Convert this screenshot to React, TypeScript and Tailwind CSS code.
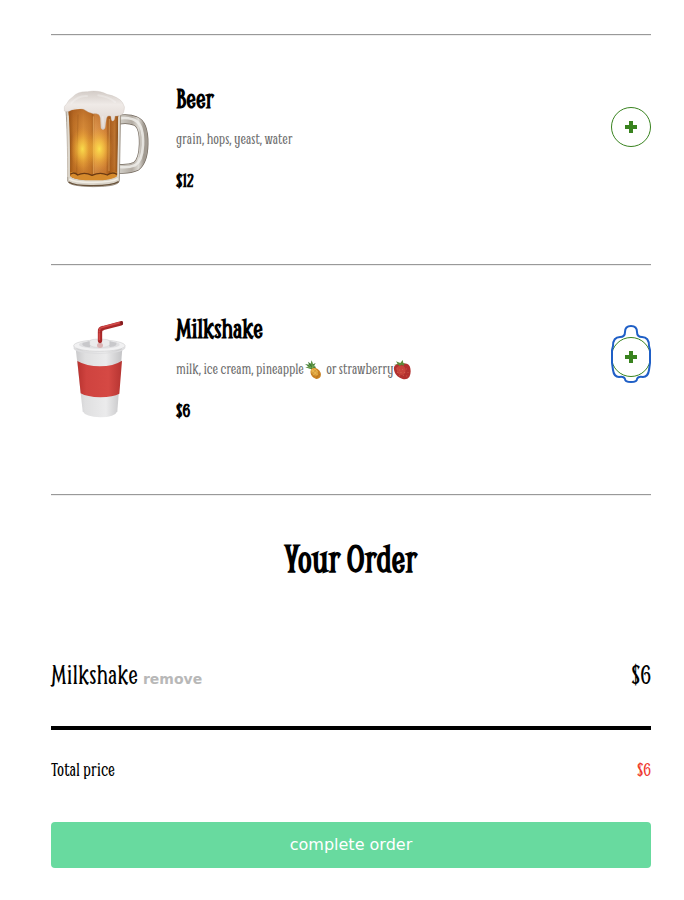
import type { ReactNode } from "react";

const display = "font-['Smythe','Liberation_Sans_Narrow','Liberation_Serif',serif]";

function Beer() {
  return (
    <svg viewBox="3 39 300 300" className="h-[100px] w-[100px]" role="img" aria-label="Beer mug">
      <defs>
        <linearGradient id="ale" x1="0" x2="1">
          <stop offset="0" stopColor="#87470f" />
          <stop offset=".1" stopColor="#bd7026" />
          <stop offset=".3" stopColor="#d98f3c" />
          <stop offset=".49" stopColor="#c1752a" />
          <stop offset=".53" stopColor="#e09b54" />
          <stop offset=".75" stopColor="#d0813a" />
          <stop offset=".82" stopColor="#a35a1c" />
          <stop offset=".92" stopColor="#bd7430" />
          <stop offset="1" stopColor="#7c4514" />
        </linearGradient>
        <linearGradient id="aleShade" x1="0" y1="0" x2="0" y2="1">
          <stop offset="0" stopColor="#a0521a" stopOpacity=".6" />
          <stop offset=".4" stopColor="#c97828" stopOpacity="0" />
          <stop offset=".8" stopColor="#b4600f" stopOpacity=".15" />
          <stop offset="1" stopColor="#a55208" stopOpacity=".5" />
        </linearGradient>
        <radialGradient id="aleGlow">
          <stop offset="0" stopColor="#ffe94e" />
          <stop offset=".4" stopColor="#fccb40" stopOpacity=".7" />
          <stop offset="1" stopColor="#e79322" stopOpacity="0" />
        </radialGradient>
        <linearGradient id="foam" x1="0" y1="0" x2="0" y2="1">
          <stop offset="0" stopColor="#d3ccc7" />
          <stop offset=".35" stopColor="#efeae7" />
          <stop offset="1" stopColor="#d9cfc9" />
        </linearGradient>
        <linearGradient id="handle" x1="0" x2="1">
          <stop offset="0" stopColor="#d5d2cb" />
          <stop offset=".55" stopColor="#b3aca3" />
          <stop offset=".8" stopColor="#dcd9d3" />
          <stop offset="1" stopColor="#a29b92" />
        </linearGradient>
      </defs>
      <path d="M204 134Q236 129 256 138Q282 148 281 207Q280 258 258 274Q237 284 203 281" fill="none" stroke="#72685d" strokeWidth="29" />
      <path d="M204 134Q236 129 256 138Q282 148 281 207Q280 258 258 274Q237 284 203 281" fill="none" stroke="url(#handle)" strokeWidth="25" />
      <path d="M208 130Q243 126 260 139Q281 156 279 210Q277 258 255 271Q235 279 208 276" fill="none" stroke="#efedea" strokeWidth="8" opacity=".85" />
      <path d="M48 108Q53 165 53 318Q54 334 130 335Q206 335 208 318L212 115Z" fill="#d9d3c8" stroke="#827566" strokeWidth="2" />
      <path d="M55 106Q61 165 60 302Q72 316 130 315Q190 315 202 301L206 115Q170 90 125 98Z" fill="url(#ale)" />
      <path d="M55 106Q61 165 60 302Q72 316 130 315Q190 315 202 301L206 115Q170 90 125 98Z" fill="url(#aleShade)" />
      <path d="M84 119L80 299M127 113V306M174 126L171 302" stroke="#854713" strokeWidth="2" opacity=".4" />
      <path d="M130 124V298M178 132L177 288" stroke="#ffd590" strokeWidth="3" opacity=".4" />
      <ellipse cx="97" cy="222" rx="36" ry="66" fill="url(#aleGlow)" opacity=".85" />
      <ellipse cx="148" cy="222" rx="40" ry="66" fill="url(#aleGlow)" opacity=".9" />
      <path d="M61 292Q75 286 83 301Q103 286 126 302Q151 286 172 301Q185 285 201 293L200 305Q180 317 130 316Q77 316 62 305Z" fill="#d58a2c" />
      <path d="M61 298Q72 289 83 300Q103 290 126 301Q151 290 172 300Q187 289 201 298" fill="none" stroke="#6b3a12" strokeWidth="4" />
      <path d="M58 312Q75 323 130 322Q187 322 204 311" fill="none" stroke="#f1ede4" strokeWidth="5" />
      <path d="M56 321Q74 333 130 332Q188 332 206 320" fill="none" stroke="#68523b" strokeWidth="4" />
      <path d="M54 122V306M206 124L204 302" stroke="#e6ded2" strokeWidth="3" />
      <path d="M43 108Q40 92 49 88Q56 73 68 66Q82 49 112 50Q145 44 171 58Q205 65 217 82Q228 95 221 112Q214 125 195 123Q194 138 188 138Q183 139 183 124Q171 119 169 131L165 160Q159 168 153 160L151 129Q149 114 130 116Q111 111 101 103Q79 96 65 105Q52 114 43 108Z" fill="url(#foam)" stroke="#c9c0b9" strokeWidth="1" />
      <path d="M64 84Q85 61 111 63M145 61Q176 65 195 81M158 126L160 155" fill="none" stroke="#fff" strokeWidth="6" strokeLinecap="round" opacity=".25" />
    </svg>
  );
}

function Cup() {
  return (
    <svg viewBox="3 39 300 300" className="h-[100px] w-[100px]" role="img" aria-label="Cup with straw">
      <defs>
        <linearGradient id="paper" x1="0" x2="1">
          <stop offset="0" stopColor="#c9c9cb" />
          <stop offset=".2" stopColor="#dfdfe0" />
          <stop offset=".65" stopColor="#ebebec" />
          <stop offset="1" stopColor="#c3c3c5" />
        </linearGradient>
        <linearGradient id="sleeve" x1="0" x2="1">
          <stop offset="0" stopColor="#b8322f" />
          <stop offset=".2" stopColor="#cf433f" />
          <stop offset=".7" stopColor="#d54944" />
          <stop offset="1" stopColor="#b53431" />
        </linearGradient>
      </defs>
      <path d="M77 130L98 319Q106 336 151 337Q195 337 202 319L217 130Z" fill="url(#paper)" />
      <path d="M82 168Q110 184 150 184Q190 184 216 167L208 266Q190 276 151 277Q111 276 92 265Z" fill="url(#sleeve)" />
      <path d="M71 121Q74 142 149 144Q222 142 226 121V129Q216 146 149 146Q81 146 71 131Z" fill="#dcdcde" />
      <ellipse cx="148" cy="122" rx="77" ry="17" fill="#f1f1f2" stroke="#d0d0d2" strokeWidth="2" />
      <ellipse cx="148" cy="119" rx="61" ry="12" fill="#e0e0e2" />
      <path d="M98 114Q91 124 119 127Q127 116 119 108M177 108Q171 119 180 126Q204 123 199 113" fill="#c8c8cb" />
      <path d="M119 109Q121 102 148 102Q177 102 179 109V119Q174 127 149 128Q124 127 119 119Z" fill="#ebebec" stroke="#c2c2c4" strokeWidth="1" />
      <ellipse cx="150" cy="121" rx="9" ry="8" fill="#d9b4b5" />
      <path d="M150 108V80Q149 71 160 69L213 55" fill="none" stroke="#aa2829" strokeWidth="13" strokeLinejoin="round" strokeLinecap="round" />
      <path d="M148 106V80Q147 68 160 66L209 53" fill="none" stroke="#d24a49" strokeWidth="5" />
      <ellipse cx="215" cy="54" rx="4" ry="6" fill="#811c20" />
      <path d="M144 83H156M146 76L157 80M151 70L160 76" stroke="#8e2022" strokeWidth="1" />
    </svg>
  );
}

function Pineapple() {
  return (
    <svg viewBox="0 0 54 60" className="mr-0.5 inline-block h-5 w-[18px] align-middle" role="img" aria-label="pineapple">
      <path d="M22 28L4 22L14 20L3 12L15 14L12 5L20 11L23 1L27 13L35 9L30 18L36 21L31 28Z" fill="#3f7d35" />
      <path d="M9 21L22 24L14 14M23 7L26 24L31 14" stroke="#8eb75c" strokeWidth="2" fill="none" />
      <ellipse cx="35" cy="40" rx="14" ry="18" transform="rotate(-38 35 40)" fill="#cd8424" />
      <ellipse cx="32" cy="36" rx="9" ry="12" transform="rotate(-38 32 36)" fill="#ebb44c" />
      <path d="M22 34L43 53M27 27L49 46M22 45L38 28M27 51L45 35M36 55L49 42" stroke="#935718" strokeWidth="1" opacity=".7" />
    </svg>
  );
}

function Strawberry() {
  return (
    <svg viewBox="0 0 54 60" className="inline-block h-5 w-[18px] align-middle" role="img" aria-label="strawberry">
      <path d="M5 17Q15 7 31 11Q50 9 52 25Q55 40 49 51Q42 60 29 57Q10 51 5 37Q0 23 5 17Z" fill="#b2302f" />
      <path d="M10 23Q20 13 33 19Q42 29 34 43Q21 49 13 38Z" fill="#cc4840" opacity=".8" />
      <path d="M2 14L14 12L9 4L22 9L29 0L31 9L39 12L32 13L33 18L26 14L19 18L17 14Z" fill="#5d8b3b" />
      <path d="M12 26v2M20 29v2M29 27v2M40 26v2M14 36v2M24 37v2M35 36v2M45 37v2M20 46v2M31 46v2M41 47v2" stroke="#e08d68" strokeWidth="2" />
    </svg>
  );
}

function FocusRing() {
  return (
    <svg viewBox="0 0 40 60" className="pointer-events-none absolute -top-[14px] -left-px h-[60px] w-10" aria-hidden="true">
      <path d="M14 8Q14 2 20 2Q26 2 26 8Q26 13 31 13Q38 13 38 22L39 26V39L38 46Q37 53 32 53Q27 52 26 55Q26 58 20 58Q14 58 14 55Q13 52 8 53Q3 53 2 46L1 39V26L2 22Q2 13 9 13Q14 13 14 8Z" fill="none" stroke="#1f5fc6" strokeWidth="2" />
    </svg>
  );
}

function Rule() {
  return <hr className="border-0 border-t border-b border-t-[#999999] border-b-[#eeeeee]" />;
}

type ItemProps = { name: string; price: string; picture: ReactNode; focused?: boolean; children: ReactNode };

function MenuItem({ name, price, picture, focused, children }: ItemProps) {
  return (
    <article className="flex items-start pt-[47px] pb-[65px]">
      <div className="mt-[5px] mr-[25px] shrink-0">{picture}</div>
      <div className={`flex flex-1 flex-col gap-[15px] ${display}`}>
        <h2 className="text-[28px] leading-8 font-bold">{name}</h2>
        <p className="h-[18px] text-[16px] leading-[18px] text-[#6f6f6f]">{children}</p>
        <p className="text-[20px] leading-9 font-bold">{price}</p>
      </div>
      <button type="button" aria-label={`Add ${name}`} className="relative mt-6 flex h-10 w-10 shrink-0 items-center justify-center rounded-full border border-[#39831f] text-[#39831f] outline-none">
        <svg viewBox="0 0 12 12" className="h-3 w-3" aria-hidden="true">
          <path d="M4 0H8V4H12V8H8V12H4V8H0V4H4Z" fill="currentColor" />
        </svg>
        {focused && <FocusRing />}
      </button>
    </article>
  );
}

export default function App() {
  return (
    <main className="bg-white pt-[34px] pr-[33px] pb-8 pl-[51px] text-black">
      <Rule />
      <MenuItem name="Beer" price="$12" picture={<Beer />}>grain, hops, yeast, water</MenuItem>
      <Rule />
      <MenuItem name="Milkshake" price="$6" picture={<Cup />} focused>
        milk, ice cream, pineapple<Pineapple /> or strawberry<Strawberry />
      </MenuItem>
      <Rule />
      <section className={display}>
        <h2 className="pt-[42px] text-center text-[40px] leading-10 font-bold">Your Order</h2>
        <div className="mt-[79px] flex items-center justify-between border-b-4 border-black pb-[33px] text-[28px] leading-9">
          <div className="flex items-baseline gap-[5px]">
            <span>Milkshake</span>
            <button type="button" className="font-['DejaVu_Sans',sans-serif] text-[14px] leading-5 font-bold text-[#b8b8b8]">remove</button>
          </div>
          <span>$6</span>
        </div>
        <div className="mt-7 flex justify-between text-[20px] leading-6">
          <span>Total price</span>
          <span className="text-[#ef3a2e]">$6</span>
        </div>
        <button type="button" className="mt-10 h-[46px] w-full rounded-[4px] bg-[#68da9f] font-['DejaVu_Sans',sans-serif] text-[16px] text-white">complete order</button>
      </section>
    </main>
  );
}
